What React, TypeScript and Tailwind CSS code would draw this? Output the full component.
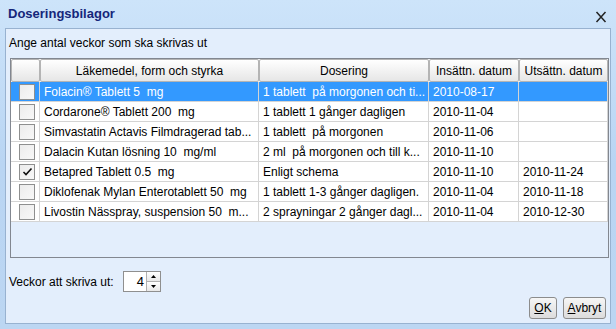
import React from "react";

type Row = {
  name: string;
  dose: string;
  start: string;
  end: string;
  checked?: boolean;
  selected?: boolean;
};

const rows: Row[] = [
  { name: "Folacin® Tablett 5  mg", dose: "1 tablett  på morgonen och ti...", start: "2010-08-17", end: "", selected: true },
  { name: "Cordarone® Tablett 200  mg", dose: "1 tablett 1 gånger dagligen", start: "2010-11-04", end: "" },
  { name: "Simvastatin Actavis Filmdragerad tab...", dose: "1 tablett  på morgonen", start: "2010-11-06", end: "" },
  { name: "Dalacin Kutan lösning 10  mg/ml", dose: "2 ml  på morgonen och till k...", start: "2010-11-10", end: "" },
  { name: "Betapred Tablett 0.5  mg", dose: "Enligt schema", start: "2010-11-10", end: "2010-11-24", checked: true },
  { name: "Diklofenak Mylan Enterotablett 50  mg", dose: "1 tablett 1-3 gånger dagligen.", start: "2010-11-04", end: "2010-11-18" },
  { name: "Livostin Nässpray, suspension 50  m...", dose: "2 sprayningar 2 gånger dagl...", start: "2010-11-04", end: "2010-12-30" },
];

const cols = "grid grid-cols-[29px_219px_170px_90px_89px]";

const Check = ({ checked }: { checked?: boolean }) => (
  <div className="w-[16px] h-[16px] border border-[#8e8f8f] bg-gradient-to-br from-[#ececec] to-[#f8f8f8] flex items-center justify-center">
    {checked && (
      <svg width="11" height="10" viewBox="0 0 11 10">
        <path d="M1.5 5 L4 7.5 L9.5 1.5" stroke="#111" strokeWidth="1.6" fill="none" />
      </svg>
    )}
  </div>
);

const HeaderCell = ({ children }: { children?: React.ReactNode }) => (
  <div className="h-[23px] border border-[#b4b4b4] rounded-[2px] bg-gradient-to-b from-[#ffffff] to-[#e6e6e6] flex items-center justify-center text-black">
    {children}
  </div>
);

export default function App() {
  return (
    <div
      className="w-[616px] h-[329px] bg-gradient-to-b from-[#cde4fa] via-[#b9d5f3] to-[#bcd6f2] px-[5px] pb-[5px] flex flex-col text-[12px] text-black"
      style={{ fontFamily: '"Liberation Sans", Arial, sans-serif' }}
    >
      <div className="h-[28px] flex items-center justify-between pl-[3px] pr-[4px] shrink-0">
        <span className="text-[13px] font-bold text-[#15267a]">Doseringsbilagor</span>
        <svg width="12" height="12" viewBox="0 0 12 12" className="mt-[6px]">
          <path d="M1.5 1 L10.5 11 M10.5 1 L1.5 11" stroke="#222" strokeWidth="1.5" />
        </svg>
      </div>
      <div className="flex-1 border border-[#98b2d0] bg-[#e3eefc] flex flex-col">
        <div className="pl-[3px] pt-[5px] h-[29px]">Ange antal veckor som ska skrivas ut</div>
        <div className="ml-[4px] w-[599px] h-[200px] border border-[#828790] bg-[#e3eefc] flex flex-col">
          <div className={`${cols} gap-0 bg-[#f4f4f4]`}>
            <HeaderCell />
            <HeaderCell>Läkemedel, form och styrka</HeaderCell>
            <HeaderCell>Dosering</HeaderCell>
            <HeaderCell>Insättn. datum</HeaderCell>
            <HeaderCell>Utsättn. datum</HeaderCell>
          </div>
          {rows.map((r, i) => {
            const bg = r.selected ? "bg-[#3399ff] text-white" : "bg-white text-black";
            const cell = "h-[20px] border-r border-b border-[#d4d4d4] flex items-center pl-[4px] whitespace-pre overflow-hidden";
            return (
              <div key={i} className={`${cols} ${bg} w-[597px]`}>
                <div className={`${cell} justify-center pl-0`}>
                  <Check checked={r.checked} />
                </div>
                <div className={cell}>{r.name}</div>
                <div className={cell}>{r.dose}</div>
                <div className={cell}>{r.start}</div>
                <div className={cell}>{r.end}</div>
              </div>
            );
          })}
        </div>
        <div className="flex items-center pl-[3px] mt-[13px] h-[21px]">
          <span className="w-[114px]">Veckor att skriva ut:</span>
          <div className="flex h-[21px] border border-[#8f8f8f] bg-white">
            <div className="w-[22px] flex items-center justify-end pr-[2px] text-[13px]">4</div>
            <div className="w-[14px] flex flex-col border-l border-[#b0b0b0]">
              <div className="flex-1 flex items-center justify-center bg-gradient-to-b from-[#ffffff] to-[#e8e8e8] border-b border-[#b0b0b0]">
                <svg width="5" height="3" viewBox="0 0 5 3"><path d="M0 3 L2.5 0 L5 3 Z" fill="#000" /></svg>
              </div>
              <div className="flex-1 flex items-center justify-center bg-gradient-to-b from-[#ffffff] to-[#e8e8e8]">
                <svg width="5" height="3" viewBox="0 0 5 3"><path d="M0 0 L2.5 3 L5 0 Z" fill="#000" /></svg>
              </div>
            </div>
          </div>
        </div>
        <div className="flex justify-end gap-[6px] pr-[4px] mt-[5px]">
          <button className="w-[28px] h-[22px] border border-[#8c8c8c] rounded-[3px] bg-gradient-to-b from-[#f6f6f6] to-[#dcdcdc] flex items-center justify-center">
            <span><span className="underline">O</span>K</span>
          </button>
          <button className="w-[43px] h-[22px] border border-[#8c8c8c] rounded-[3px] bg-gradient-to-b from-[#f6f6f6] to-[#dcdcdc] flex items-center justify-center">
            <span><span className="underline">A</span>vbryt</span>
          </button>
        </div>
      </div>
    </div>
  );
}
